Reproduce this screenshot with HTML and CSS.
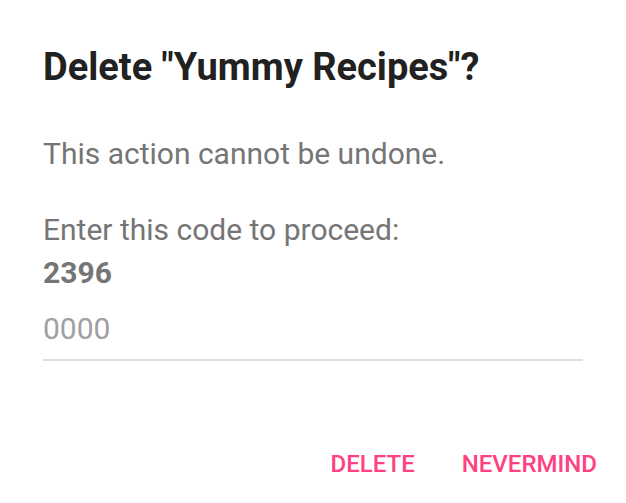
FILE: index.html
```html
<!DOCTYPE html>
<html lang="en">
<head>
    <meta charset="UTF-8">
    <title>Delete</title>
    <link rel="stylesheet" href="styles.css">
</head>
<body>
    <div class="dialog">
        <h1 class="title">Delete "Yummy Recipes"?</h1>
        <p class="warning">This action cannot be undone.</p>
        <p class="prompt">Enter this code to proceed:</p>
        <p class="code">2396</p>
        <input class="code-input" type="text" placeholder="0000">
        <div class="actions">
            <button class="action">DELETE</button>
            <button class="action">NEVERMIND</button>
        </div>
    </div>
</body>
</html>
```

FILE: styles.css
```css
body {
    margin: 0;
    background: #ffffff;
    font-family: Roboto, 'Liberation Sans', sans-serif;
}

.dialog {
    padding: 45px 43px 0 43px;
}

.title {
    margin: 0;
    font-size: 38px;
    font-weight: 700;
    color: #212121;
    line-height: 44px;
}

.warning {
    margin: 45px 0 0 0;
    font-size: 30px;
    color: #757575;
    line-height: 40px;
}

.prompt {
    margin: 34px 0 0 0;
    font-size: 30px;
    color: #757575;
    line-height: 43px;
}

.code {
    margin: 0;
    font-size: 30px;
    font-weight: 700;
    color: #757575;
    line-height: 43px;
}

.code-input {
    display: block;
    width: 100%;
    box-sizing: content-box;
    height: 35px;
    margin-top: 17px;
    padding: 0 0 13px 0;
    border: none;
    border-bottom: 2px solid #e0e0e0;
    font-family: inherit;
    font-size: 30px;
    color: #757575;
    outline: none;
}

.code-input::placeholder {
    color: #a0a0a0;
}

.actions {
    display: flex;
    justify-content: flex-end;
    gap: 47px;
    margin-top: 89px;
    margin-right: -14px;
}

.action {
    background: none;
    border: none;
    padding: 0;
    font-family: inherit;
    font-size: 24px;
    font-weight: 500;
    line-height: 28px;
    color: #ff4081;
    cursor: pointer;
}
```
